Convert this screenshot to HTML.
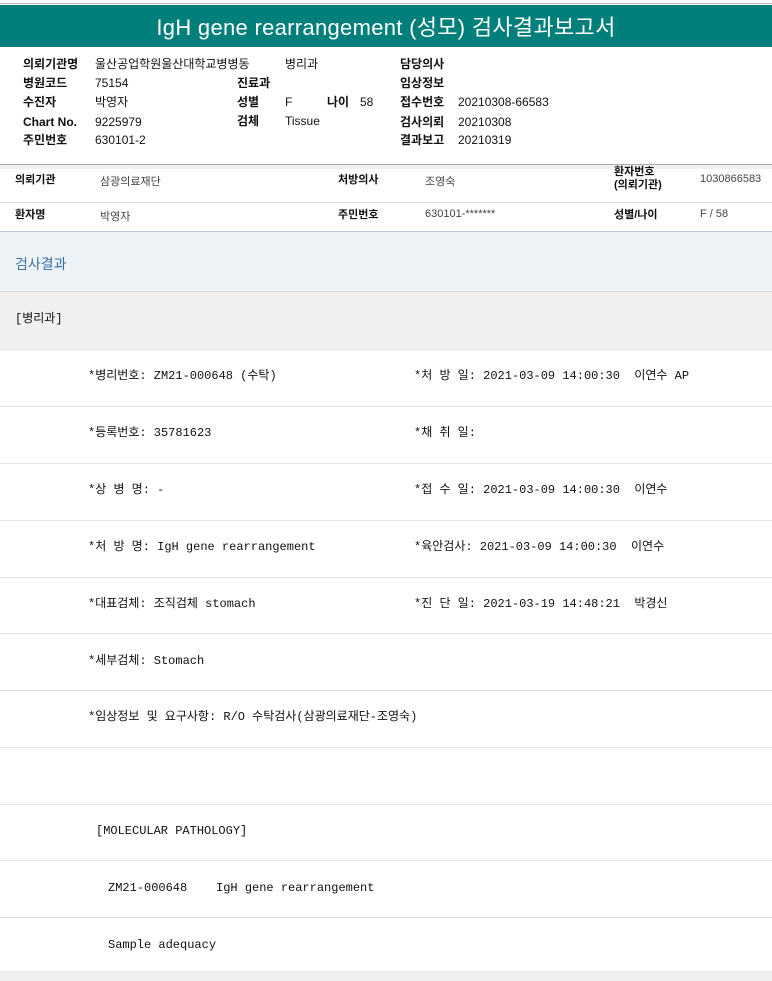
<!DOCTYPE html>
<html><head><meta charset="utf-8"><style>
*{margin:0;padding:0;box-sizing:border-box}
body{width:772px;height:981px;background:#fff;position:relative;overflow:hidden;font-family:"Liberation Sans","Noto Sans CJK KR",sans-serif;color:#111}
.a{position:absolute;white-space:nowrap}
.hd{font-size:12px;line-height:14px}
.b{font-weight:bold}
.m{font-family:"Liberation Mono","Noto Sans CJK KR",monospace;font-size:12px;letter-spacing:0px;line-height:14px}
.ln{position:absolute;left:0;width:772px;height:1px;background:#e3e3e3}
.s{font-size:11px;color:#444}
</style></head><body>
<div class="ln" style="top:3px;background:#bbb"></div>
<div class="a" style="left:0;top:5px;width:772px;height:42px;background:#007f7b"></div>
<div class="a" style="left:0;top:15px;width:772px;text-align:center;color:#fff;font-size:22px;line-height:26px;font-weight:normal;letter-spacing:0.3px">IgH gene rearrangement (성모) 검사결과보고서</div>

<div class="a hd b" style="left:23px;top:57px">의뢰기관명</div><div class="a hd" style="left:95px;top:57px">울산공업학원울산대학교병병동</div><div class="a hd" style="left:285px;top:57px">병리과</div><div class="a hd b" style="left:400px;top:57px">담당의사</div>
<div class="a hd b" style="left:23px;top:76px">병원코드</div><div class="a hd" style="left:95px;top:76px">75154</div><div class="a hd b" style="left:237px;top:76px">진료과</div><div class="a hd b" style="left:400px;top:76px">임상정보</div>
<div class="a hd b" style="left:23px;top:95px">수진자</div><div class="a hd" style="left:95px;top:95px">박영자</div><div class="a hd b" style="left:237px;top:95px">성별</div><div class="a hd" style="left:285px;top:95px">F</div><div class="a hd b" style="left:327px;top:95px">나이</div><div class="a hd" style="left:360px;top:95px">58</div><div class="a hd b" style="left:400px;top:95px">접수번호</div><div class="a hd" style="left:458px;top:95px">20210308-66583</div>
<div class="a hd b" style="left:23px;top:115px">Chart No.</div><div class="a hd" style="left:95px;top:115px">9225979</div><div class="a hd b" style="left:237px;top:114px">검체</div><div class="a hd" style="left:285px;top:114px">Tissue</div><div class="a hd b" style="left:400px;top:115px">검사의뢰</div><div class="a hd" style="left:458px;top:115px">20210308</div>
<div class="a hd b" style="left:23px;top:133px">주민번호</div><div class="a hd" style="left:95px;top:133px">630101-2</div><div class="a hd b" style="left:400px;top:133px">결과보고</div><div class="a hd" style="left:458px;top:133px">20210319</div>

<div class="ln" style="top:164px;background:#aaa"></div>
<div class="a" style="left:0;top:165px;width:772px;height:4px;background:#f0f0f0"></div>
<div class="a hd b" style="left:15px;top:173px;font-size:11px">의뢰기관</div><div class="a s" style="left:100px;top:173px">삼광의료재단</div>
<div class="a hd b" style="left:338px;top:173px;font-size:11px">처방의사</div><div class="a s" style="left:425px;top:173px">조영숙</div>
<div class="a hd b" style="left:614px;top:166px;font-size:11px;line-height:13px">환자번호<br>(의뢰기관)</div><div class="a s" style="left:700px;top:173px">1030866583</div>
<div class="ln" style="top:202px"></div>
<div class="a hd b" style="left:15px;top:208px;font-size:11px">환자명</div><div class="a s" style="left:100px;top:208px">박영자</div>
<div class="a hd b" style="left:338px;top:208px;font-size:11px">주민번호</div><div class="a s" style="left:425px;top:208px">630101-*******</div>
<div class="a hd b" style="left:614px;top:208px;font-size:11px">성별/나이</div><div class="a s" style="left:700px;top:208px">F / 58</div>
<div class="ln" style="top:231px;background:#b8c8d8"></div>

<div class="a" style="left:0;top:232px;width:772px;height:59px;background:#eef3f8"></div>
<div class="a" style="left:15px;top:254px;font-size:14px;color:#3b6fa8">검사결과</div>
<div class="ln" style="top:291px;background:#d8d8d8"></div>
<div class="a" style="left:0;top:292px;width:772px;height:57px;background:#f0f0f0"></div>
<div class="a m" style="left:15px;top:312px">[병리과]</div>
<div class="ln" style="top:349px"></div>
<div class="ln" style="top:406px"></div>
<div class="ln" style="top:463px"></div>
<div class="ln" style="top:520px"></div>
<div class="ln" style="top:577px"></div>
<div class="ln" style="top:633px"></div>
<div class="ln" style="top:690px"></div>
<div class="ln" style="top:747px"></div>
<div class="ln" style="top:804px"></div>
<div class="ln" style="top:860px"></div>
<div class="ln" style="top:917px"></div>
<div class="a" style="left:0;top:971px;width:772px;height:10px;background:#efefef"></div>

<div class="a m" style="left:88px;top:369px">*병리번호: ZM21-000648 (수탁)</div><div class="a m" style="left:414px;top:369px">*처 방 일: 2021-03-09 14:00:30 &nbsp;이연수 AP</div>
<div class="a m" style="left:88px;top:426px">*등록번호: 35781623</div><div class="a m" style="left:414px;top:426px">*채 취 일:</div>
<div class="a m" style="left:88px;top:483px">*상 병 명: -</div><div class="a m" style="left:414px;top:483px">*접 수 일: 2021-03-09 14:00:30 &nbsp;이연수</div>
<div class="a m" style="left:88px;top:540px">*처 방 명: IgH gene rearrangement</div><div class="a m" style="left:414px;top:540px">*육안검사: 2021-03-09 14:00:30 &nbsp;이연수</div>
<div class="a m" style="left:88px;top:597px">*대표검체: 조직검체 stomach</div><div class="a m" style="left:414px;top:597px">*진 단 일: 2021-03-19 14:48:21 &nbsp;박경신</div>
<div class="a m" style="left:88px;top:654px">*세부검체: Stomach</div>
<div class="a m" style="left:88px;top:710px">*임상정보 및 요구사항: R/O 수탁검사(삼광의료재단-조영숙)</div>
<div class="a m" style="left:96px;top:824px">[MOLECULAR PATHOLOGY]</div>
<div class="a m" style="left:108px;top:881px">ZM21-000648 &nbsp;&nbsp;&nbsp;IgH gene rearrangement</div>
<div class="a m" style="left:108px;top:938px">Sample adequacy</div>
</body></html>
